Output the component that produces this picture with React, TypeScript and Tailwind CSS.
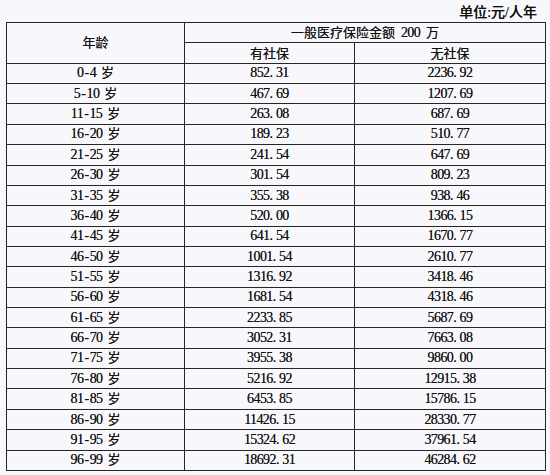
import React from "react";

const rows: [string, string, string][] = [
  ["0-4", "852.31", "2236.92"],
  ["5-10", "467.69", "1207.69"],
  ["11-15", "263.08", "687.69"],
  ["16-20", "189.23", "510.77"],
  ["21-25", "241.54", "647.69"],
  ["26-30", "301.54", "809.23"],
  ["31-35", "355.38", "938.46"],
  ["36-40", "520.00", "1366.15"],
  ["41-45", "641.54", "1670.77"],
  ["46-50", "1001.54", "2610.77"],
  ["51-55", "1316.92", "3418.46"],
  ["56-60", "1681.54", "4318.46"],
  ["61-65", "2233.85", "5687.69"],
  ["66-70", "3052.31", "7663.08"],
  ["71-75", "3955.38", "9860.00"],
  ["76-80", "5216.92", "12915.38"],
  ["81-85", "6453.85", "15786.15"],
  ["86-90", "11426.15", "28330.77"],
  ["91-95", "15324.62", "37961.54"],
  ["96-99", "18692.31", "46284.62"],
];

function Num({ v }: { v: string }) {
  const [a, b] = v.split(".");
  return (
    <span className="text-[14px] tracking-[-0.6px]">
      {a}
      <span className="inline-block w-[6.4px] text-left">.</span>
      {b}
    </span>
  );
}

function Range({ v }: { v: string }) {
  const [a, b] = v.split("-");
  return (
    <span>
      <span className="text-[14px] tracking-[-0.6px]">
        {a}
        <span className="inline-block w-[6.4px] text-center">-</span>
        {b}
      </span>
      <span className="inline-block w-[5px]"></span>岁
    </span>
  );
}

const cell = "border border-[#262626] h-[20.36px] p-0 text-center align-middle leading-none font-normal";

export default function App() {
  return (
    <div
      className="w-[550px] h-[475px] bg-[#f8f7fb] text-[#111111] text-[13px] overflow-hidden [text-shadow:0_0_0.6px_rgba(0,0,0,0.7)]"
      style={{ fontFamily: '"Liberation Serif", "Noto Sans CJK SC", serif' }}
    >
      <div className="h-[22px] flex items-center justify-end pr-[13px] pt-[3px] text-[14px] font-medium">
        单位:元/人年
      </div>
      <table className="ml-[6px] w-[539px] table-fixed border-collapse">
        <colgroup>
          <col className="w-[178px]" />
          <col className="w-[170px]" />
          <col className="w-[191px]" />
        </colgroup>
        <thead>
          <tr>
            <th rowSpan={2} className={cell}>
              年龄
            </th>
            <th colSpan={2} className={cell}>
              一般医疗保险金额<span className="inline-block w-[6px]"></span>
              <span className="text-[14px] tracking-[-0.6px]">200</span>
              <span className="inline-block w-[6px]"></span>万
            </th>
          </tr>
          <tr>
            <th className={cell}>有社保</th>
            <th className={cell}>无社保</th>
          </tr>
        </thead>
        <tbody>
          {rows.map(([age, a, b]) => (
            <tr key={age}>
              <td className={cell}>
                <Range v={age} />
              </td>
              <td className={cell}>
                <Num v={a} />
              </td>
              <td className={cell}>
                <Num v={b} />
              </td>
            </tr>
          ))}
        </tbody>
      </table>
    </div>
  );
}
